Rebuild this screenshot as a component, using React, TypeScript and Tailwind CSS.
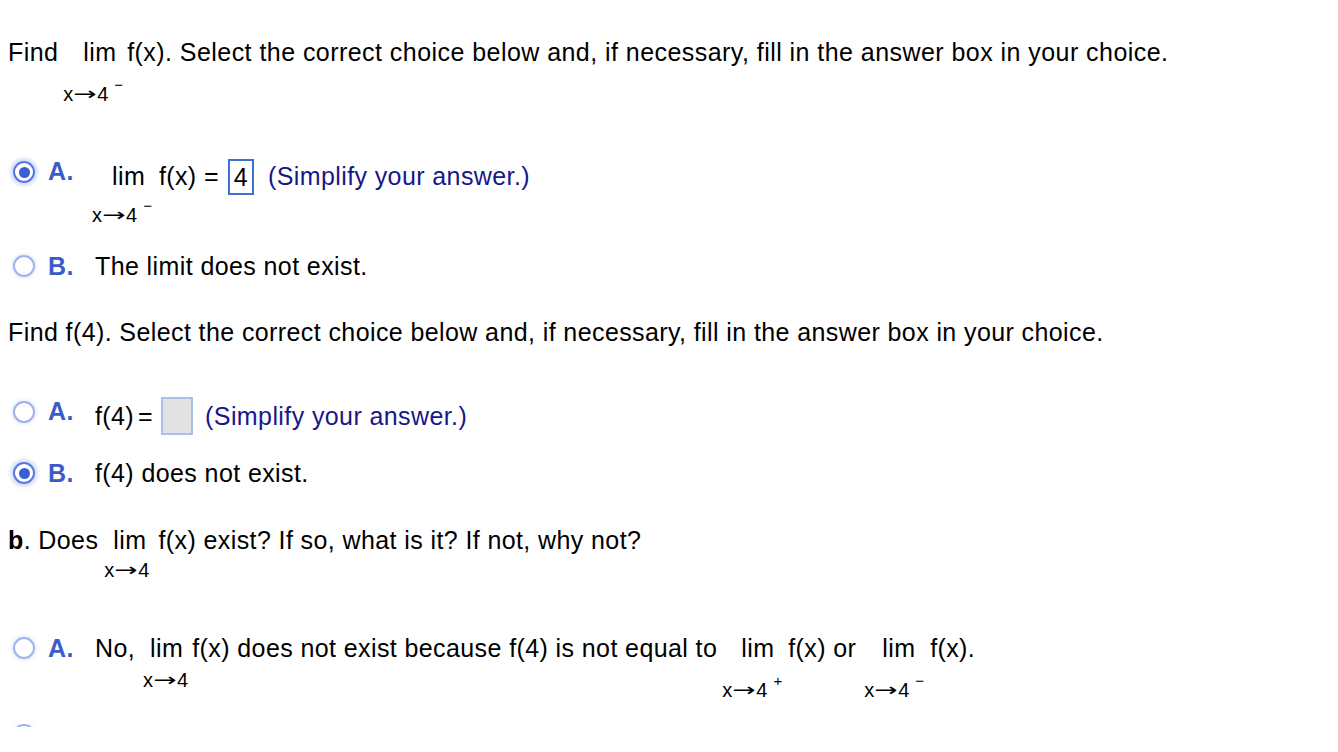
import React from 'react'

const Radio = ({ on }: { on?: boolean }) => (
  <span
    className={`flex h-[22px] w-[22px] shrink-0 items-center justify-center rounded-full border-2 ${
      on
        ? 'border-[#5577dd] shadow-[0_0_4px_2px_rgba(130,155,230,0.45)]'
        : 'border-[#9fb3ea] shadow-[0_0_3px_1px_rgba(170,190,240,0.4)]'
    }`}
  >
    {on && <span className="h-[11px] w-[11px] rounded-full bg-[#3a5fd3]" />}
  </span>
)

// lim with the approach written under it
const Lim = ({ sup, pad, gap }: { sup?: string; pad: string; gap: string }) => (
  <span className="flex flex-col items-start">
    <span className={pad}>lim</span>
    <span className={`flex items-start text-[20px] leading-[22px] tracking-normal ${gap}`}>
      <span>x</span>
      <span className="inline-block w-[24px] scale-x-[1.55] text-center font-['DejaVu_Sans',sans-serif] text-[18px]">→</span>
      <span>4</span>
      {sup && <span className="-mt-[9px] ml-[6px] text-[15px]">{sup}</span>}
    </span>
  </span>
)

const Choice = ({
  on,
  letter,
  h,
  up,
  children,
}: {
  on?: boolean
  letter: string
  h: string
  up?: boolean
  children: React.ReactNode
}) => (
  <div className={`flex items-start ${h}`}>
    <span className={`ml-[13px] ${up ? '-mt-[1px]' : 'mt-[3px]'}`}>
      <Radio on={on} />
    </span>
    <span className={`ml-[13px] w-[44px] shrink-0 font-bold text-[#3b5bc9] ${up ? '-mt-[5px]' : ''}`}>
      {letter}.
    </span>
    {children}
  </div>
)

export default function App() {
  return (
    <div className="min-h-[752px] w-[1338px] overflow-hidden bg-white pt-[38px] font-['Liberation_Sans',Arial,sans-serif] text-[25px] leading-[28px] tracking-[0.4px] text-black">
      {/* part a: left limit */}
      <div className="flex h-[124px] items-start pl-[8px]">
        <span>Find</span>
        <span className="ml-[5px]">
          <Lim sup="−" pad="pl-[20px]" gap="mt-[17px]" />
        </span>
        <span className="ml-[4px] tracking-[0.45px]">f(x). Select the correct choice below and, if necessary, fill in the answer box in your choice.</span>
      </div>

      <Choice on letter="A" h="h-[90px]" up>
        <span>
          <Lim sup="−" pad="pl-[20px]" gap="mt-[14px]" />
        </span>
        <span className="ml-[7px]">f(x) =</span>
        <span className="-mt-[3px] ml-[9px] flex h-[36px] w-[26px] items-center justify-center border-2 border-[#3f6fcf] bg-white">
          4
        </span>
        <span className="ml-[14px] text-[#17178a]">(Simplify your answer.)</span>
      </Choice>

      <Choice letter="B" h="h-[66px]">
        <span className="ml-[3px]">The limit does not exist.</span>
      </Choice>

      {/* f(4) */}
      <div className="h-[84px] pl-[8px]">Find f(4). Select the correct choice below and, if necessary, fill in the answer box in your choice.</div>

      <Choice letter="A" h="h-[57px]" up>
        <span className="ml-[3px]">f(4)</span>
        <span className="ml-[4px]">=</span>
        <span className="-mt-[5px] ml-[8px] h-[38px] w-[32px] border-2 border-[#a7c0ea] bg-[#e2e2e2]" />
        <span className="ml-[12px] text-[#17178a]">(Simplify your answer.)</span>
      </Choice>

      <Choice on letter="B" h="h-[67px]">
        <span className="ml-[3px]">f(4) does not exist.</span>
      </Choice>

      {/* part b */}
      <div className="flex h-[108px] items-start pl-[8px]">
        <span className="font-bold">b</span>
        <span>. Does</span>
        <span className="ml-[15px]">
          <Lim pad="pl-[0px]" gap="mt-[5px] -ml-[9px]" />
        </span>
        <span className="ml-[9px]">f(x) exist? If so, what is it? If not, why not?</span>
      </div>

      <Choice letter="A" h="h-[90px]">
        <span className="ml-[3px]">No,</span>
        <span className="ml-[15px]">
          <Lim pad="pl-[0px]" gap="mt-[7px] -ml-[7px]" />
        </span>
        <span className="ml-[4px]">f(x) does not exist because f(4) is not equal to</span>
        <span className="ml-[5px]">
          <Lim sup="+" pad="pl-[19px]" gap="mt-[17px]" />
        </span>
        <span className="ml-[6px]">f(x) or</span>
        <span className="ml-[8px]">
          <Lim sup="−" pad="pl-[18px]" gap="mt-[17px]" />
        </span>
        <span className="ml-[6px]">f(x).</span>
      </Choice>

      {/* next choice, cut off by the window */}
      <div className="ml-[13px] h-[3px] w-[22px] overflow-hidden">
        <Radio />
      </div>
    </div>
  )
}
